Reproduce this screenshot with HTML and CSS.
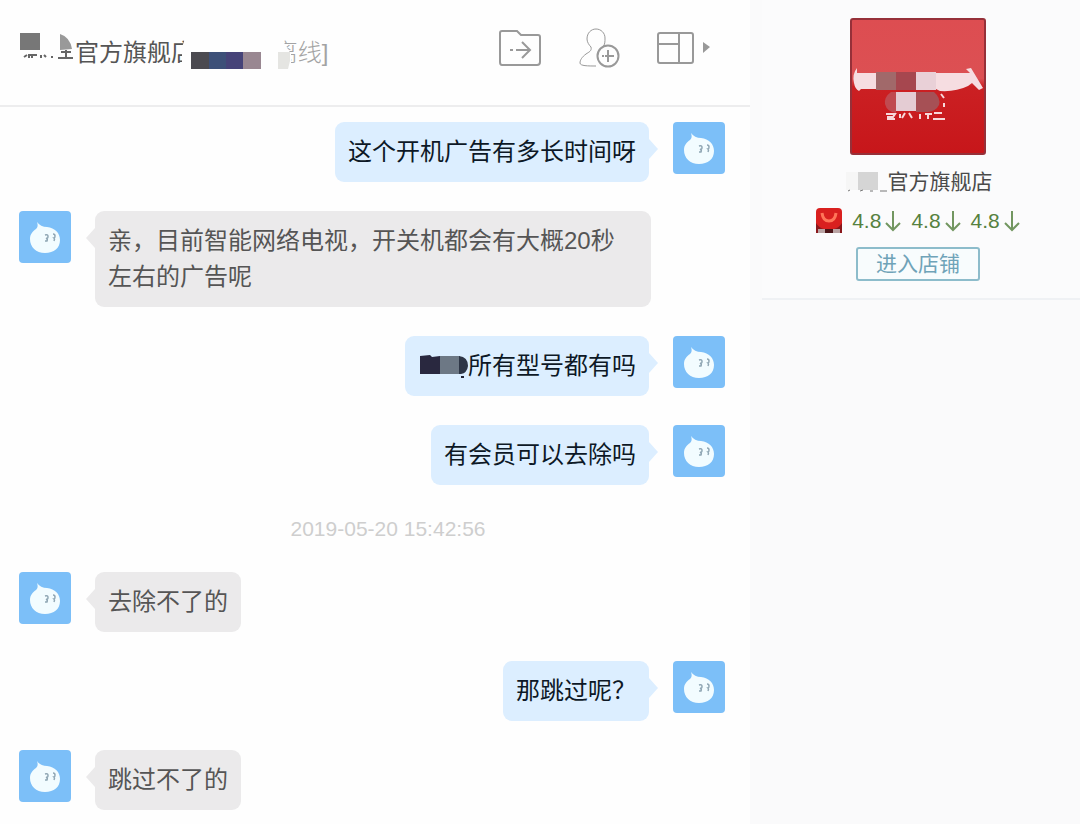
FILE: index.html
```html
<!DOCTYPE html>
<html lang="zh-CN">
    <head>
        <meta charset="utf-8">
        <title>官方旗舰店</title>
        <link rel="stylesheet" href="styles.css">
    </head>
    <body>
        <!-- shared avatar drawing -->
        <svg class="defs" width="0" height="0" aria-hidden="true">
            <symbol id="avatar" viewBox="0 0 52 52">
                <rect width="52" height="52" rx="4" fill="#7cbff8"/>
                <path d="M18 11C20 14 24 16 28 16C36 17 41 22 41 29C41 37 35 42 26 42C17 42 11 36 11 28C11 23 14 20 17 18C19 16 19 14 18 11Z" fill="#f2fcff"/>
                <path d="M26 24q3-1 3 1.500t-2 1.500q2 1 1 3h-2M34 23q2 0 2 2t-1 2q1 1 0 3" fill="none" stroke="#8fa6b4" stroke-width="1.500"/>
            </symbol>
        </svg>
        <div class="window">
            <main class="chat">
                <header class="chatHeader">
                    <h1 class="title">
                        <svg class="titleMosaic" width="55" height="32" viewBox="0 0 55 32" aria-hidden="true">
                            <rect x="0" y="1" width="20" height="17" fill="#777"/>
                            <path d="M40 2Q50 5 52 17L40 18Z" fill="#999"/>
                            <path d="M4 25l3-2M9 26v-3h8M12 24v2M21 26v-3M26 25l-2-2M32 26v-2M38 26h15M46 25v-7M41 20h10" fill="none" stroke="#666" stroke-width="2"/>
                        </svg>
                        <span>官方旗舰店</span>
                        <span class="status">[离线]</span>
                        <svg class="titleCover" width="110" height="36" viewBox="0 0 110 36" aria-hidden="true">
                            <path d="M4 0H98L109 18V36H0V11Z" fill="#fefefe"/>
                            <rect x="9" y="16" width="18" height="17" fill="#4b4a50"/>
                            <rect x="27" y="16" width="17" height="17" fill="#3d5078"/>
                            <rect x="44" y="16" width="17" height="17" fill="#464378"/>
                            <rect x="61" y="16" width="18" height="17" fill="#998791"/>
                            <path d="M96 16H108V25L106 33H96Z" fill="#e5e5e2"/>
                        </svg>
                    </h1>
                    <div class="tools">
                        <button class="tool" aria-label="发送文件">
                            <svg width="44" height="40" viewBox="0 0 44 40">
                                <path d="M4 3H19L23 7H40Q42 7 42 9V34Q42 37 39 37H4Q2 37 2 34V5Q2 3 4 3Z"/>
                                <path d="M12 22H15M18 22H31M24 14L32 22L24 30"/>
                            </svg>
                        </button>
                        <button class="tool" aria-label="添加好友">
                            <svg width="42" height="40" viewBox="0 0 42 40">
                                <path d="M25 19C27 16 27 14 27 10C27 5 23 1 18 1C13 1 9 5 9 11C9 14 11 17 13 19C14 23 11 24 8 26C4 29 2 32 2 35C2 38 10 38 18 38" stroke-width="1"/>
                                <circle cx="30" cy="28" r="10.500"/>
                                <path d="M30 22V34M27 28H36M24 28H26"/>
                            </svg>
                        </button>
                        <button class="tool" aria-label="窗口布局">
                            <svg width="54" height="40" viewBox="0 0 54 40">
                                <rect x="2" y="5" width="35" height="30" rx="2"/>
                                <path d="M23 5V35M2 16H23"/>
                                <path d="M47 14L54 19L47 25Z" fill="#999" stroke="none"/>
                            </svg>
                        </button>
                    </div>
                </header>
                <div class="messages">
                    <div class="message mine">
                        <p class="bubble">这个开机广告有多长时间呀</p>
                        <svg class="avatar"><use href="#avatar"/></svg>
                    </div>
                    <div class="message">
                        <svg class="avatar"><use href="#avatar"/></svg>
                        <p class="bubble">亲，目前智能网络电视，开关机都会有大概20秒左右的广告呢</p>
                    </div>
                    <div class="message mine">
                        <p class="bubble"><svg class="wordMosaic" width="50" height="24" viewBox="0 0 50 24" aria-hidden="true">
                            <path d="M2 2L12 1L14 3L22 2V20H2Z" fill="#29283f"/>
                            <path d="M22 2H42V20H22Z" fill="#6d7885"/>
                            <path d="M41 2Q50 3 50 12Q49 19 43 20H41Z" fill="#2e3646"/>
                            <path d="M43 23h3" stroke="#223" stroke-width="2"/>
                        </svg>所有型号都有吗</p>
                        <svg class="avatar"><use href="#avatar"/></svg>
                    </div>
                    <div class="message mine">
                        <p class="bubble">有会员可以去除吗</p>
                        <svg class="avatar"><use href="#avatar"/></svg>
                    </div>
                    <time class="timestamp" datetime="2019-05-20T15:42:56">2019-05-20 15:42:56</time>
                    <div class="message">
                        <svg class="avatar"><use href="#avatar"/></svg>
                        <p class="bubble">去除不了的</p>
                    </div>
                    <div class="message mine">
                        <p class="bubble">那跳过呢？</p>
                        <svg class="avatar"><use href="#avatar"/></svg>
                    </div>
                    <div class="message">
                        <svg class="avatar"><use href="#avatar"/></svg>
                        <p class="bubble">跳过不了的</p>
                    </div>
                </div>
            </main>
            <aside class="shop">
                <div class="shopCard">
                    <svg class="shopLogo" width="136" height="137" viewBox="0 0 136 137" aria-hidden="true">
                        <defs>
                            <linearGradient id="red" x1="0" y1="0" x2="0" y2="1">
                                <stop offset="0" stop-color="#dd4d51"/>
                                <stop offset="0.44" stop-color="#dc5053"/>
                                <stop offset="0.5" stop-color="#cb2023"/>
                                <stop offset="1" stop-color="#c7161a"/>
                            </linearGradient>
                        </defs>
                        <rect x="1" y="1" width="134" height="135" rx="2" fill="url(#red)" stroke="#963039" stroke-width="2"/>
                        <path d="M7 50Q2 56 4 65Q5 71 9 73L11 71H86L90 73Q106 74 118 68L122 65L129 72L133 70L121 50L116 51L120 55H7Z" fill="#f6dde1"/>
                        <path d="M26 54H46V72H26Z" fill="#a1696a"/>
                        <path d="M46 54H66V72H46Z" fill="#a6474f"/>
                        <path d="M66 54H86V72H66Z" fill="#e9d0d7"/>
                        <path d="M46 74H41Q34 79 35 86Q37 94 46 95Z" fill="#c04a50"/>
                        <path d="M46 74H66V93H46Z" fill="#e4ccd3"/>
                        <path d="M66 74H84Q91 80 89 87Q86 93 78 94H66Z" fill="#a65055"/>
                        <path d="M36 96h9l-2 3h-5v2h7M50 96v4M55 95l-3 5M59 95l3 5M70 96v5M75 96h7M78 96v5M84 95h8M83 101h12M91 76l3 4M94 85v4" fill="none" stroke="#f7d8da" stroke-width="2"/>
                    </svg>
                    <h2 class="shopName">
                        <svg width="44" height="24" viewBox="0 0 44 24" aria-hidden="true">
                            <rect x="2" y="2" width="13" height="18" fill="#f6f6f6"/>
                            <rect x="14" y="2" width="20" height="18" fill="#d5d5d5"/>
                            <path d="M4 21l2-1M16 21l3-1M26 21h3M36 21h7" stroke="#777" stroke-width="1"/>
                        </svg>官方旗舰店
                    </h2>
                    <div class="ratings">
                        <svg width="26" height="26" viewBox="0 0 26 26" aria-hidden="true">
                            <rect width="26" height="25" rx="4" fill="#d9201f"/>
                            <path d="M0 15Q3 20 8 21H18Q23 20 26 15V25H0Z" fill="#8a171b"/>
                            <path d="M6 5Q7 13 13 13Q19 13 20 5" fill="none" stroke="#ff7659" stroke-width="3"/>
                            <path d="M2 21h7v4H2zM17 21h7v4h-7z" fill="#b9a3a3"/>
                            <path d="M9 21h8v4H9z" fill="#4b1518"/>
                        </svg>
                        <span class="rating">4.8<svg class="down" viewBox="0 0 16 22"><path d="M8 1V20M1 13L8 20L15 13"/></svg></span>
                        <span class="rating">4.8<svg class="down" viewBox="0 0 16 22"><path d="M8 1V20M1 13L8 20L15 13"/></svg></span>
                        <span class="rating">4.8<svg class="down" viewBox="0 0 16 22"><path d="M8 1V20M1 13L8 20L15 13"/></svg></span>
                    </div>
                    <button class="enterShop">进入店铺</button>
                </div>
            </aside>
        </div>
    </body>
</html>
```
FILE: styles.css
```css
*
{
    box-sizing: border-box;
}
body
{
    margin: 0;
    background-color: #fefefe;
    font-family: "Liberation Sans", "Noto Sans CJK SC", sans-serif;
}
button
{
    font-family: inherit;
    cursor: pointer;
}
.defs
{
    position: absolute;
}
.window
{
    display: flex;
    min-height: 100vh;
}

/* chat column */
.chat
{
    flex: 1;
    min-width: 0;
}
.chatHeader
{
    display: flex;
    justify-content: space-between;
    align-items: flex-start;
    height: 107px;
    padding: 28px 40px 0 20px;
    border-bottom: 2px solid #ededee;
}
.title
{
    position: relative;
    display: flex;
    align-items: center;
    margin: 0;
    height: 44px;
    font-size: 24px;
    font-weight: 400;
    color: #555;
}
.titleMosaic
{
    margin-top: -4px;
}
.status
{
    margin-left: 72px;
    color: #a3a3a3;
    font-weight: 300;
}
.titleCover
{
    position: absolute;
    left: 162px;
    top: 8px;
}
.tools
{
    display: flex;
    gap: 36px;
}
.tool
{
    display: block;
    padding: 0;
    border: none;
    background: none;
}
.tool svg
{
    display: block;
    fill: none;
    stroke: #999;
    stroke-width: 2;
}
.messages
{
    display: flex;
    flex-direction: column;
    gap: 29px;
    padding: 15px 25px 14px 19px;
}
.message
{
    display: flex;
    align-items: flex-start;
    gap: 24px;
}
.mine
{
    justify-content: flex-end;
}
.avatar
{
    flex: none;
    width: 52px;
    height: 52px;
}
.bubble
{
    position: relative;
    margin: 0;
    max-width: 556px;
    padding: 12px 13px;
    border-radius: 9px;
    background-color: #ebeaeb;
    color: #555;
    font-size: 24px;
    line-height: 36px;
}
.bubble::before
{
    content: "";
    position: absolute;
    top: 17px;
    left: -9px;
    border: 10px solid transparent;
    border-left: 0;
    border-right: 9px solid #ebeaeb;
}
.mine .bubble
{
    background-color: #dceeff;
    color: #0d1826;
}
.mine .bubble::before
{
    left: auto;
    right: -9px;
    border-right: 0;
    border-left: 9px solid #dceeff;
}
.wordMosaic
{
    vertical-align: -4px;
}
.timestamp
{
    padding-left: 32px;
    text-align: center;
    font-size: 21px;
    line-height: 29px;
    color: #cecece;
}

/* shop column */
.shop
{
    width: 330px;
    padding-left: 12px;
    background-color: #fafafb;
}
.shopCard
{
    display: flex;
    flex-direction: column;
    align-items: center;
    height: 300px;
    padding: 18px 6px 0 0;
    border-bottom: 2px solid #eff1f4;
    background-color: #fbfbfc;
}
.shopName
{
    display: flex;
    align-items: center;
    margin: 12px 0 0;
    font-size: 21px;
    font-weight: 400;
    line-height: 30px;
    color: #4a4a4a;
}
.ratings
{
    display: flex;
    align-items: center;
    gap: 10px;
    margin-top: 9px;
    height: 30px;
    color: #56813f;
    font-size: 21px;
}
.rating
{
    display: flex;
    align-items: center;
    gap: 4px;
}
.down
{
    width: 16px;
    height: 22px;
    fill: none;
    stroke: #729660;
    stroke-width: 2;
}
.enterShop
{
    margin-top: 11px;
    padding: 0 18px;
    height: 34px;
    border: 2px solid #8dbccb;
    border-radius: 3px;
    background-color: #f8fcfd;
    color: #6fa3b8;
    font-size: 21px;
    line-height: 28px;
}
```
